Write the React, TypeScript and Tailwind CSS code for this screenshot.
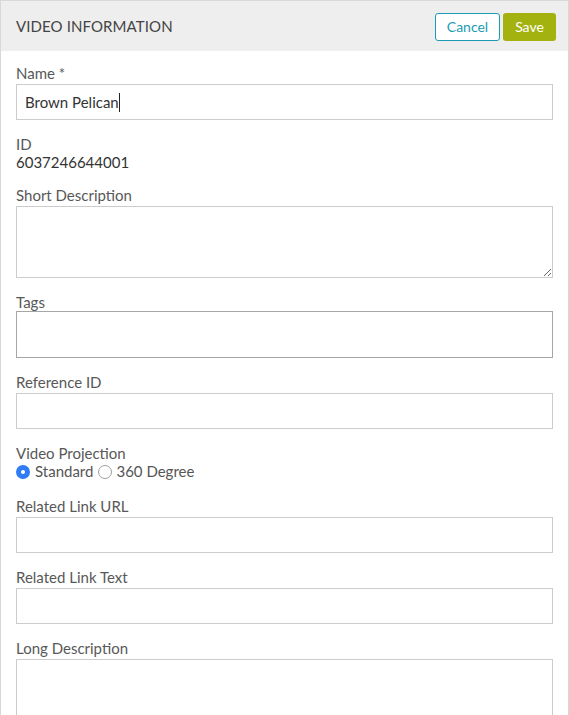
import type { ReactNode } from 'react'

function Label({ children }: { children: ReactNode }) {
  return <div className="text-[15px] leading-[18px] text-[#585858] mb-[2px]">{children}</div>
}

function TextInput() {
  return <div className="h-[36px] border border-[#cccccc] bg-white" />
}

function Field({ label, children }: { label: string; children: ReactNode }) {
  return (
    <div className="mb-[15px]">
      <Label>{label}</Label>
      {children}
    </div>
  )
}

export default function App() {
  return (
    <div className="w-[569px] h-[715px] overflow-hidden bg-white border-x border-t border-[#d8d8d8] font-['Lato','Liberation_Sans',sans-serif]">
      {/* Header */}
      <header className="h-[50px] bg-[#eeeeee] flex items-center justify-between pl-[15px] pr-[12px]">
        <h1 className="text-[15px] text-[#444444] tracking-[0.1px]">VIDEO INFORMATION</h1>
        <div className="flex items-center gap-[3px] pt-[1px]">
          <button className="h-[28px] w-[65px] rounded-[3px] border border-[#1c9bb5] bg-white text-[14px] text-[#1c9bb5]">
            Cancel
          </button>
          <button className="h-[28px] w-[53px] rounded-[3px] bg-[#a3b20f] text-[14px] text-white">
            Save
          </button>
        </div>
      </header>

      <main className="px-[15px] pt-[13px]">
        <Field label="Name *">
          <div className="h-[36px] border border-[#cccccc] bg-white flex items-center pl-[8px] text-[15px] text-[#333333]">
            <span>Brown Pelican</span>
            <span className="inline-block w-px h-[19px] bg-[#222222]" />
          </div>
        </Field>

        <div className="mb-[15px] text-[15px] leading-[18px]">
          <div className="text-[#585858]">ID</div>
          <div className="text-[#333333]">6037246644001</div>
        </div>

        <Field label="Short Description">
          <textarea
            readOnly
            className="block w-full h-[72px] border border-[#cccccc] bg-white outline-none resize-y"
          />
        </Field>

        <div className="mb-[15px]">
          <div className="text-[15px] leading-[18px] text-[#585858]">Tags</div>
          <div className="h-[47px] border border-[#a6a6a6] bg-white" />
        </div>

        <Field label="Reference ID">
          <TextInput />
        </Field>

        <div className="mb-[17px]">
          <div className="text-[15px] leading-[18px] text-[#585858]">Video Projection</div>
          <div className="flex items-center h-[18px] text-[15px] text-[#555555]">
            <span className="w-[14px] h-[14px] mt-[2px] rounded-full bg-[#2f7cf6] flex items-center justify-center mr-[5px]">
              <span className="w-[4px] h-[4px] rounded-full bg-white" />
            </span>
            <span>Standard</span>
            <span className="w-[14px] h-[14px] mt-[2px] rounded-full border border-[#a0a0a0] bg-white ml-[5px] mr-[4px]" />
            <span>360 Degree</span>
          </div>
        </div>

        <Field label="Related Link URL">
          <TextInput />
        </Field>

        <Field label="Related Link Text">
          <TextInput />
        </Field>

        <Field label="Long Description">
          <div className="h-[100px] border border-[#cccccc] bg-white" />
        </Field>
      </main>
    </div>
  )
}
